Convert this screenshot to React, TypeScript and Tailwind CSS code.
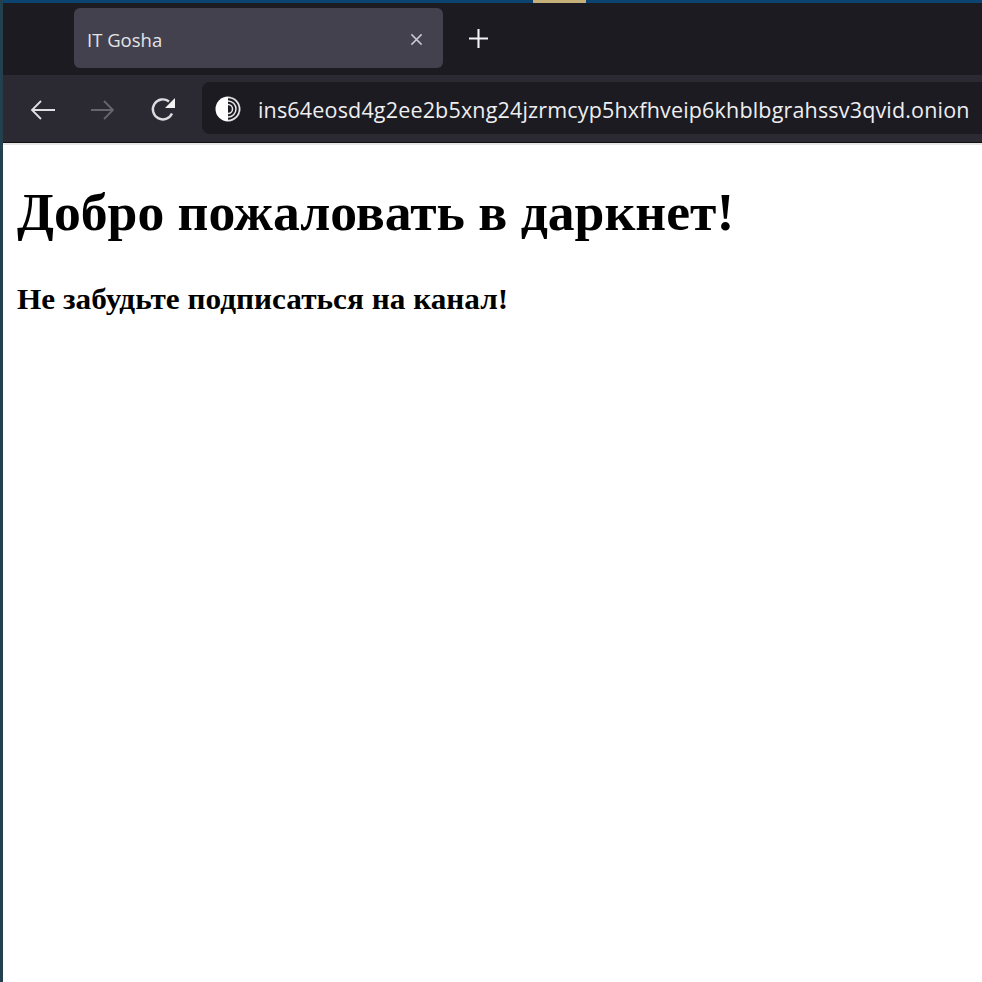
const App = () => {
  return (
    <div className="flex h-[982px] w-[982px] flex-col overflow-hidden border-l-[3px] border-[#23404f] bg-white">
      {/* window top edge */}
      <div className="flex h-[3px] shrink-0 bg-[#0b4470] pl-[530px]">
        <div className="h-full w-[53px] bg-[#c4b078]"></div>
      </div>

      {/* tab strip */}
      <div className="flex h-[72px] shrink-0 items-start bg-[#1c1b22] pl-[71px] pt-[5px]">
        <div className="flex h-[60px] w-[369px] items-center justify-between rounded-[6px] bg-[#42414d] pl-[13px] pr-[20px]">
          <span className="mt-[3px] font-['Open_Sans',sans-serif] text-[18.5px] text-[#e4e4e8]">IT Gosha</span>
          <svg className="mt-[2px]" width="13" height="13" viewBox="0 0 14 14" fill="none" stroke="#c8c8ce" strokeWidth="1.6">
            <path d="M1.5 1.5 12.5 12.5M12.5 1.5 1.5 12.5" />
          </svg>
        </div>
        <svg className="ml-[26px] mt-[21px]" width="19" height="19" viewBox="0 0 20 20" fill="none" stroke="#f4f4f6" strokeWidth="2.2">
          <path d="M10 0V20M0 10H20" />
        </svg>
      </div>

      {/* toolbar */}
      <div className="flex h-[68px] shrink-0 items-center border-b border-[#101015] bg-[#2b2a33] pb-[1px] pl-[27px]">
        <svg className="mt-[3px]" width="25" height="22" viewBox="0 0 25 22" fill="none" stroke="#e0e0e4" strokeWidth="1.8">
          <path d="M25 11H2M11 2 2 11l9 9" />
        </svg>
        <svg className="ml-[36px] mt-[3px]" width="24" height="22" viewBox="0 0 24 22" fill="none" stroke="#66656d" strokeWidth="1.8">
          <path d="M0 11h22M13 2l9 9-9 9" />
        </svg>
        <svg className="ml-[35px] mt-[2px]" width="26" height="26" viewBox="0 0 26 26" fill="none">
          <path d="M22 17.5A10 10 0 1 1 19 5.5" stroke="#dcdce0" strokeWidth="2.4" />
          <path d="M25 2v10h-10z" fill="#f2f2f4" />
        </svg>
        <div className="ml-[26px] flex h-[52px] flex-1 items-center rounded-l-[8px] bg-[#1c1b22] pl-[13px]">
          <svg className="mt-[1px]" width="26" height="26" viewBox="0 0 26 26" fill="none">
            <circle cx="13" cy="13" r="12.5" fill="#ffffff" />
            <path d="M13 .5a12.5 12.5 0 0 1 0 25z" fill="#1c1b22" />
            <path d="M13 1.5a11.5 11.5 0 0 1 0 23" stroke="#e8e8ea" strokeWidth="1.6" />
            <path d="M13 5a8 8 0 0 1 0 16" stroke="#e8e8ea" strokeWidth="1.5" />
            <path d="M13 8.5a4.5 4.5 0 0 1 0 9" stroke="#e8e8ea" strokeWidth="1.5" />
          </svg>
          <span className="ml-[17px] mt-[5px] whitespace-nowrap font-['Open_Sans',sans-serif] text-[21.5px] tracking-[0.17px] text-[#eeeef1]">
            ins64eosd4g2ee2b5xng24jzrmcyp5hxfhveip6khblbgrahssv3qvid.onion
          </span>
        </div>
      </div>

      {/* page */}
      <div className="flex-1 border-t-2 border-[#e6e6e3] bg-white pl-[14px] font-['Liberation_Serif',serif] text-black">
        <h1 className="mt-[37px] text-[53.65px] font-bold leading-[60px]">Добро пожаловать в даркнет!</h1>
        <h2 className="mt-[42px] origin-left scale-x-[1.097] text-[28.5px] font-bold leading-[32px]">
          Не забудьте подписаться на канал!
        </h2>
      </div>
    </div>
  );
};

export default App;
